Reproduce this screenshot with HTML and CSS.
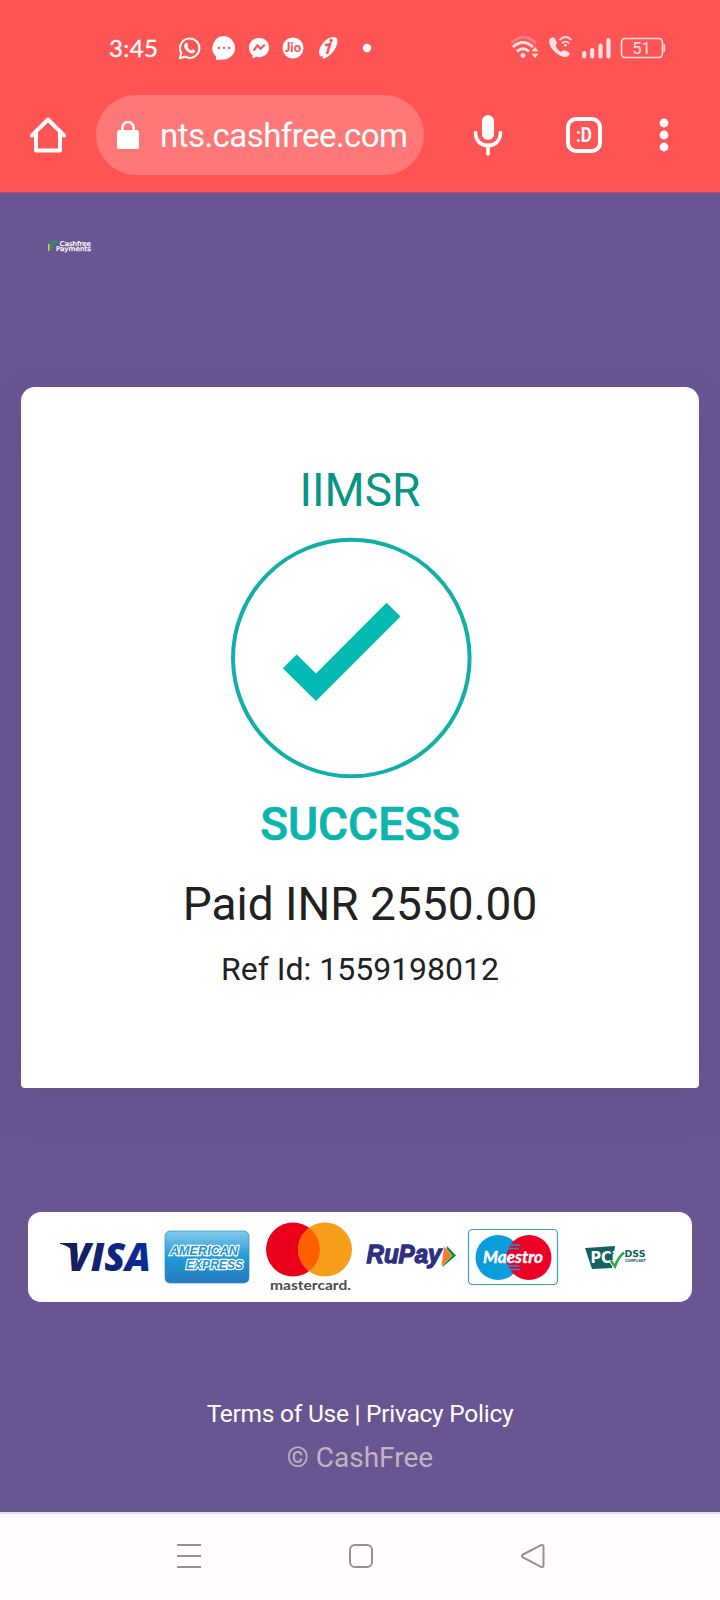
FILE: index.html
```html
<!DOCTYPE html>
<html lang="en">
<head>
<meta charset="utf-8">
<title>Payment successful</title>
<link rel="stylesheet" href="styles.css">
</head>
<body>
<div class="phone">
  <header class="chrome">
    <div class="status">
      <span class="clock">3:45</span>
      <div class="notifications">
        <svg width="24" height="26" viewBox="0 0 24 26"><path d="M1.700 23.300 3.300 18A9.700 9.700 0 1 1 7.100 21.700Z" fill="none" stroke="#fff" stroke-width="2" stroke-linejoin="round"/><path d="M7.800 8c.7-.6 1.300-.4 1.600.3l.7 1.700c.2.6-.9 1.400-.7 1.900.8 1.600 2 2.800 3.700 3.500.5.2 1.200-1.200 1.800-1l1.900.9c.7.4.4 1.500-.2 2.100-1.400 1.300-3 1.200-5.300 0-2.300-1.100-4.300-3.300-5-5.500-.5-1.600 0-3 1.500-3.900z" fill="#fff"/></svg>
        <svg width="24" height="26" viewBox="0 0 24 26"><path d="M12 1a12 11.800 0 1 1-2 23.600C8 25 6 25 4 25V21.500A12 12 0 0 1 12 1z" fill="#fff"/><path d="M7 13h.1M12 13h.1M17 13h.1" stroke="#ff5454" stroke-width="2.300" stroke-linecap="round"/></svg>
        <svg width="24" height="26" viewBox="0 0 24 26"><path d="M12 3c6 0 10 4.200 10 9.600s-4 9.600-10 9.600c-1.100 0-2-.1-2.900-.4L5.600 23.300V20.300A9.400 9.400 0 0 1 2 12.600C2 7.200 6 3 12 3z" fill="#fff"/><path d="m6.500 15.500 4-5 3 3.200 4.300-3.900" fill="none" stroke="#ff5454" stroke-width="2.200"/></svg>
        <svg width="24" height="26" viewBox="0 0 24 26"><circle cx="12" cy="13" r="10.500" fill="#fff"/><text class="jio" x="12" y="17" text-anchor="middle" textLength="16" lengthAdjust="spacingAndGlyphs">Jio</text></svg>
        <svg width="24" height="26" viewBox="0 0 24 26"><path d="M7 8C11 3 17 .8 20 2.800c3 2.500 1 9-2.500 13.500C13 22 8.500 24 6.500 23.500l.7-2.500C5 22.500 3 20.500 3 17.500S4.500 11 7 8z" fill="#fff"/><path d="m9 10.500 5-1.500-3 10" fill="none" stroke="#ff5454" stroke-width="2.600"/><circle cx="15" cy="5.500" r="1.700" fill="#ff5454"/></svg>
        <svg class="more-dot" width="10" height="10" viewBox="0 0 10 10"><circle cx="5" cy="5" r="4.200" fill="#fff"/></svg>
      </div>
      <div class="signals">
        <svg width="29" height="26" viewBox="0 0 29 26"><g fill="none" stroke="#ffe3e3" stroke-width="2.800"><path d="M0 8.500Q12.500-4 25 8.500" opacity=".28"/><path d="M2 12Q12 3 22 12"/><path d="M6 16.500Q12 11 18 16.500"/></g><circle cx="12" cy="20.500" r="2.400" fill="#ffe3e3"/><path d="m20.500 16.300 3.500-4.300 3.500 4.300zm0 2.400h7l-3.500 4.300z" fill="#ffe3e3"/></svg>
        <svg width="24" height="26" viewBox="0 0 24 26"><path d="M1.500 3.500C3.500 1.800 5 2 6 4l2 3.500c.6 1.300-1.500 2.300-1.200 3.500 1 2.800 2.800 4.700 5 5.700 1 .3 2.300-2 3.700-1.400l4 1.700c1.700 1 1.200 3-.3 4-3 1.800-7 .8-11-2.200S1 12 .2 8C0 6 .4 4.500 1.500 3.500z" fill="#ffe3e3"/><g fill="none" stroke="#ffe3e3" stroke-width="1.700"><path d="M10.500 5Q16.500-1 22.500 5M13 8.300Q16.500 5 20 8.300"/></g><circle cx="16.500" cy="10.300" r="1.400" fill="#ffe3e3"/></svg>
        <svg width="29" height="26" viewBox="0 0 29 26" stroke="#ffe3e3" stroke-width="4.200" stroke-linecap="round"><path d="M2.200 18V21.500M10.200 15V21.500M18.500 10.500V21.500M26.500 5V21.500"/></svg>
        <svg width="45" height="26" viewBox="0 0 45 26"><rect x="1.500" y="3.500" width="41" height="19" rx="4" fill="none" stroke="#ffe3e3" stroke-width="1.600"/><path d="M44.300 10v6" stroke="#ffe3e3" stroke-width="1.400" stroke-linecap="round"/><text class="battery" x="21.500" y="18.600" text-anchor="middle">51</text></svg>
      </div>
    </div>
    <div class="toolbar">
      <svg class="home" width="36" height="36" viewBox="0 0 36 36"><path d="M2 18.500 18 2.500 34 18.500M6 16V33.500H30V16" fill="none" stroke="#fff" stroke-width="4" stroke-linejoin="round" stroke-linecap="round"/></svg>
      <div class="address">
        <svg width="22" height="28" viewBox="0 0 22 28"><rect y="9" width="22" height="19" rx="2.500" fill="#fff"/><path d="M5.500 11V6.500a5.500 5.500 0 0 1 11 0V11" fill="none" stroke="#fff" stroke-width="2.700"/></svg>
        <span class="url">nts.cashfree.com</span>
      </div>
      <svg class="mic" width="30" height="42" viewBox="0 0 30 42"><rect x="9" y="1" width="12" height="25" rx="6" fill="#fff"/><path d="M2.500 18.500C2.500 36 27.500 36 27.500 18.500M15 31v9" fill="none" stroke="#fff" stroke-width="3.600" stroke-linecap="round"/></svg>
      <svg class="tabs" width="36" height="36" viewBox="0 0 36 36"><rect x="2" y="2" width="32" height="32" rx="8" fill="none" stroke="#fff" stroke-width="4"/><text class="tab-face" x="10" y="25" textLength="16" lengthAdjust="spacingAndGlyphs">:D</text></svg>
      <svg class="menu" width="10" height="34" viewBox="0 0 10 34"><g fill="#fff"><circle cx="5" cy="5" r="4.400"/><circle cx="5" cy="17" r="4.400"/><circle cx="5" cy="29" r="4.400"/></g></svg>
    </div>
  </header>

  <main class="page">
    <svg class="brand" width="46" height="16" viewBox="0 0 46 16"><path d="M1.700 12V5" stroke="#f4c430" stroke-width="1.600"/><path d="M4.500 10.500V5.500Q4.800 3 7 2.600" fill="none" stroke="#23965c" stroke-width="2.400"/><path d="M6 3h5" stroke="#23965c" stroke-width="3"/><text class="brand-text" x="12.800" y="6.800" textLength="31" lengthAdjust="spacingAndGlyphs">Cashfree</text><text class="brand-text" x="9" y="12.300" textLength="35" lengthAdjust="spacingAndGlyphs">Payments</text></svg>

    <section class="card">
      <h1 class="merchant">IIMSR</h1>
      <svg class="check" width="242" height="242" viewBox="0 0 242 242"><circle cx="121.300" cy="121" r="118.300" fill="none" stroke="#10b0a9" stroke-width="4"/><path d="M156.600 65.700 170.500 79.500 86 164 52.800 131.300 66.600 117.500 86 136.500z" fill="#02b9b3"/></svg>
      <p class="result">SUCCESS</p>
      <p class="amount">Paid INR 2550.00</p>
      <p class="reference">Ref Id: 1559198012</p>
    </section>

    <section class="payments">
      <svg width="664" height="90" viewBox="0 0 664 90">
        <defs>
          <linearGradient id="visa" x1="0" x2="1"><stop offset="0" stop-color="#161c59"/><stop offset="1" stop-color="#062d9c"/></linearGradient>
          <linearGradient id="amex" x1="0" y1="0" x2="0" y2="1"><stop offset="0" stop-color="#85c9ec"/><stop offset=".5" stop-color="#209bd7"/><stop offset="1" stop-color="#2679be"/></linearGradient>
        </defs>
        <g>
          <text class="visa" x="39" y="58.800" textLength="84" lengthAdjust="spacingAndGlyphs" fill="url(#visa)">VISA</text>
          <path d="M32 31h12c3 0 4 2 4.500 4.500L50 46C46 38 39 33 32 32z" fill="#161c59"/>
        </g>
        <g>
          <rect x="137" y="19" width="84" height="52" rx="5" fill="url(#amex)" stroke="#2d8cc9" stroke-width=".7"/>
          <text class="amex" x="142" y="43" textLength="68" lengthAdjust="spacingAndGlyphs">AMERICAN</text>
          <text class="amex" x="158" y="57" textLength="57" lengthAdjust="spacingAndGlyphs">EXPRESS</text>
        </g>
        <g>
          <circle cx="265" cy="37.500" r="27" fill="#eb001b"/><circle cx="297" cy="37.500" r="27" fill="#f79e1b"/>
          <path d="M281 15.800a27 27 0 0 1 0 43.400 27 27 0 0 1 0-43.400z" fill="#ff5f00"/>
          <text class="mastercard" x="242" y="77.500" textLength="81" lengthAdjust="spacingAndGlyphs">mastercard.</text>
        </g>
        <g>
          <text class="rupay" x="338.500" y="51.300" textLength="75" lengthAdjust="spacingAndGlyphs">RuPay</text>
          <path d="m419 34 9 9.500-13.500 11.500z" fill="#168348"/><path d="m416 34 8 9.500-11 11.500z" fill="#f37b31" stroke="#fff" stroke-width=".5"/>
        </g>
        <g>
          <rect x="440.500" y="17.500" width="89" height="55" rx="4" fill="#fff" stroke="#3a9fcb" stroke-width="1.200"/>
          <circle cx="470" cy="45.500" r="22.500" fill="#0a9ddc"/><circle cx="501" cy="45.500" r="22.500" fill="#ed0025"/>
          <path d="M480 33h12M479 36.500h12M479 54h12M480 57.500h12" stroke="#0a9ddc" stroke-width="1.500"/>
          <text class="maestro" x="455" y="51.300" textLength="60" lengthAdjust="spacingAndGlyphs">Maestro</text>
        </g>
        <g>
          <path d="M557 36 587 34 584 56 564 57z" fill="#15615e"/>
          <text class="pci" x="562.500" y="51" textLength="26" lengthAdjust="spacingAndGlyphs">PCi</text>
          <path d="m583 49 4 6q3-9 9-14" fill="none" stroke="#fff" stroke-width="4"/><path d="m583 49 4 5.500q3-9 9-14" fill="none" stroke="#27a74a" stroke-width="2.500"/>
          <text class="dss" x="596.500" y="45" textLength="21" lengthAdjust="spacingAndGlyphs">DSS</text>
          <text class="compliant" x="597" y="49.500" textLength="20.500" lengthAdjust="spacingAndGlyphs">COMPLIANT</text>
        </g>
      </svg>
    </section>

    <footer class="footer">
      <p class="links"><a>Terms of Use</a> | <a>Privacy Policy</a></p>
      <p class="copyright">© CashFree</p>
    </footer>
  </main>

  <nav class="system-nav">
    <svg width="26" height="26" viewBox="0 0 26 26"><path d="M1 2h24M1 13h24M1 24h24"/></svg>
    <svg width="26" height="26" viewBox="0 0 26 26"><rect x="2" y="2" width="22" height="22" rx="5"/></svg>
    <svg width="26" height="26" viewBox="0 0 26 26"><path d="M3 11.500 20.500 2.300q3-1 3 1.500V22.200q0 2.500-3 1.500L3 14.500q-2-1.500 0-3z"/></svg>
  </nav>
</div>
</body>
</html>
```
FILE: styles.css
```css
* { box-sizing: border-box; margin: 0; padding: 0; }
body { font-family: Roboto, "Liberation Sans", sans-serif; background: #6a5593; }
svg { display: block; flex: none; }
.phone { width: 720px; height: 1600px; display: flex; flex-direction: column; overflow: hidden; }

.chrome { height: 193px; background: #ff5454; border-bottom: 1px solid #b0506f; color: #fff; }
.status { display: flex; align-items: center; height: 95px; padding: 0 55px 0 109px; }
.clock { width: 68.500px; padding-top: 1px; font: 400 24px/30px Lato, sans-serif; letter-spacing: .4px; -webkit-text-stroke: .3px #fff; white-space: nowrap; }
.notifications { display: flex; align-items: center; gap: 10.600px; }
.more-dot { margin-left: 12px; }
.signals { display: flex; align-items: center; gap: 9px; margin-left: auto; }
.jio { font: 900 12.500px Lato, sans-serif; fill: #ff5454; }
.battery { font: 400 16.500px Roboto, sans-serif; fill: #ffe3e3; }

.toolbar { display: flex; align-items: center; height: 80px; padding-left: 30px; }
.address { display: flex; align-items: center; width: 328px; height: 80px; margin-left: 30px; padding-left: 21px; border-radius: 40px; background: #ff7777; }
.url { margin-left: 21px; padding-top: 2px; font-size: 33px; line-height: 40px; letter-spacing: -.55px; white-space: nowrap; }
.mic { margin-left: 49px; }
.tabs { margin-left: 63px; }
.tab-face { font: 700 20px Roboto, sans-serif; fill: #fff; }
.menu { margin-left: 57px; }

.page { height: 1319px; background: #6a5593; }
.brand { margin: 46px 0 0 47px; }
.brand-text { font: 400 6.500px "DejaVu Sans", sans-serif; fill: #fff; stroke: #fff; stroke-width: .25px; }

.card { display: flex; flex-direction: column; align-items: center; width: 678px; height: 701px; margin: 132px 0 0 21px; padding-top: 73px; border-radius: 14px 14px 4px 4px; background: #fff; box-shadow: 0 16px 45px rgba(80, 60, 120, .14); color: #212121; text-align: center; }
.merchant { font-size: 46px; font-weight: 400; line-height: 60px; color: #079586; }
.check { margin: 17px 18px 0 0; }
.result { margin-top: 15px; font-size: 46px; font-weight: 500; line-height: 60px; color: #0bb5ae; -webkit-text-stroke: .7px #0bb5ae; }
.amount { margin-top: 20px; font-size: 46px; line-height: 60px; }
.reference { margin-top: 14px; font-size: 32px; line-height: 42px; }

.payments { width: 664px; height: 90px; margin: 124px 0 0 28px; border-radius: 13px; background: #fff; }
.visa { font: italic 800 38px "Open Sans", sans-serif; }
.amex { font: italic 700 13.500px "Liberation Sans", sans-serif; fill: #2194d1; stroke: #fff; stroke-width: 2.500px; paint-order: stroke; }
.mastercard { font: 700 14px Lato, sans-serif; fill: #4b4b4b; }
.rupay { font: italic 700 26px "Liberation Sans", sans-serif; fill: #2d2f83; stroke: #2d2f83; stroke-width: 1.300px; }
.maestro { font: italic 700 17px Lato, sans-serif; fill: #fff; stroke: #fff; stroke-width: .4px; }
.pci { font: 700 15px "DejaVu Sans", sans-serif; fill: #fff; }
.dss { font: 700 9.500px "DejaVu Sans", sans-serif; fill: #15615e; }
.compliant { font: 700 4px "DejaVu Sans", sans-serif; fill: #15615e; }

.footer { padding-top: 94px; text-align: center; }
.links { font-size: 24.500px; line-height: 36px; letter-spacing: -.25px; color: #fff; }
.copyright { margin-top: 7px; font-size: 28px; line-height: 38px; color: #bfb5c0; }

.system-nav { display: flex; align-items: center; justify-content: space-between; height: 88px; padding: 0 174px 2px 176px; border-top: 2px solid #e9dcf5; background: #fffbff; }
.system-nav svg { fill: none; stroke: #968f96; stroke-width: 2; }
```
